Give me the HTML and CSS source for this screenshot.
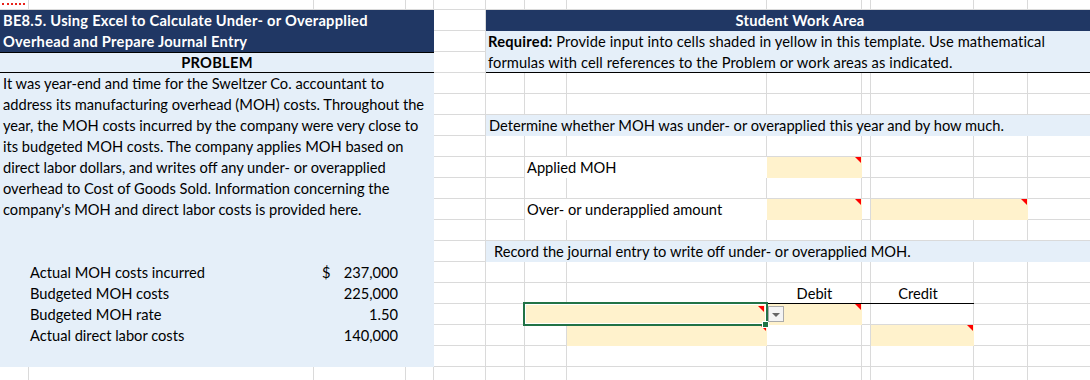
FILE: index.html
```html
<!DOCTYPE html>
<html lang="en">
<head>
    <meta charset="UTF-8">
    <title>BE8.5 Under- or Overapplied Overhead</title>
    <link rel="stylesheet" href="styles.css">
</head>
<body>
    <div class="sheet">
        <!-- cut-off cell in the top row -->
        <div class="corner"><span class="scrap"></span></div>

        <!-- problem side -->
        <div class="title">BE8.5. Using Excel to Calculate Under- or Overapplied<br>Overhead and Prepare Journal Entry</div>
        <div class="problem-head">PROBLEM</div>
        <div class="problem-bg"></div>
        <p class="story">
            It was year-end and time for the Sweltzer Co. accountant to<br>
            address its manufacturing overhead (MOH) costs. Throughout the<br>
            year, the MOH costs incurred by the company were very close to<br>
            its budgeted MOH costs. The company applies MOH based on<br>
            direct labor dollars, and writes off any under- or overapplied<br>
            overhead to Cost of Goods Sold. Information concerning the<br>
            company's MOH and direct labor costs is provided here.
        </p>

        <div class="label r14">Actual MOH costs incurred</div>
        <div class="amount r14"><span>$</span><span>237,000</span></div>
        <div class="label r15">Budgeted MOH costs</div>
        <div class="amount r15"><span>225,000</span></div>
        <div class="label r16">Budgeted MOH rate</div>
        <div class="amount r16"><span>1.50</span></div>
        <div class="label r17">Actual direct labor costs</div>
        <div class="amount r17"><span>140,000</span></div>

        <!-- student work area -->
        <div class="work-head">Student Work Area</div>
        <div class="required"><b>Required:</b> Provide input into cells shaded in yellow in this template. Use mathematical<br>formulas with cell references to the Problem or work areas as indicated.</div>

        <div class="band r7">Determine whether MOH was under- or overapplied this year and by how much.</div>

        <div class="work-label r9">Applied MOH</div>
        <div class="input col-debit r9"></div>

        <div class="work-label r11">Over- or underapplied amount</div>
        <div class="input col-debit r11"></div>
        <div class="input col-wide r11"></div>

        <div class="band indent r13">Record the journal entry to write off under- or overapplied MOH.</div>

        <div class="entry-head r15">
            <span>Debit</span>
            <span>Credit</span>
        </div>

        <div class="input col-account r16">
            <span class="selection"></span>
            <span class="fill-handle"></span>
            <span class="dropdown"></span>
        </div>
        <div class="input col-debit r16"></div>

        <div class="input col-account-indent r17"></div>
        <div class="input col-credit r17"></div>
    </div>
</body>
</html>
```

FILE: styles.css
```css
/* sheet frame */
body {
    margin: 0;
    background: #fff;
    font-family: Lato, "Open Sans", sans-serif;
    font-size: 14.67px;
    color: #000;
}

b,
.title,
.problem-head,
.work-head {
    font-weight: bold;
    letter-spacing: 0.25px;
}

.sheet {
    display: grid;
    grid-template-columns: 29px 285px 92px 28px 52px 39px 42px 200px 95px 9px 103px 54px 1fr;
    grid-template-rows: 10px repeat(18, 21px);
    width: 1090px;
    height: 380px;
    overflow: hidden;
    line-height: 21px;
    white-space: nowrap;
    /* gridlines: columns, then rows */
    background-image:
        linear-gradient(90deg,
            transparent 28px, #dadada 28px 29px,
            transparent 29px 313px, #dadada 313px 314px,
            transparent 314px 405px, #dadada 405px 406px,
            transparent 406px 433px, #dadada 433px 434px,
            transparent 434px 485px, #dadada 485px 486px,
            transparent 486px 524px, #dadada 524px 525px,
            transparent 525px 566px, #dadada 566px 567px,
            transparent 567px 766px, #dadada 766px 767px,
            transparent 767px 861px, #dadada 861px 862px,
            transparent 862px 870px, #dadada 870px 871px,
            transparent 871px 973px, #dadada 973px 974px,
            transparent 974px 1027px, #dadada 1027px 1028px,
            transparent 1028px),
        linear-gradient(180deg, transparent 20px, #dadada 20px);
    background-size: 100% 100%, 100% 21px;
    background-position: 0 0, 0 10px;
    background-repeat: no-repeat, repeat;
}

/* row helpers */
.r7 { grid-row: 7; }
.r9 { grid-row: 9; }
.r11 { grid-row: 11; }
.r13 { grid-row: 13; }
.r14 { grid-row: 14; }
.r15 { grid-row: 15; }
.r16 { grid-row: 16; }
.r17 { grid-row: 17; }

.corner {
    grid-column: 1;
    grid-row: 1;
    padding: 3px 0 0 2px;
}

.scrap {
    display: block;
    width: 23px;
    height: 2px;
    border-top: 2px dotted #e8231b;
}

/* problem side */
.title {
    grid-column: 1 / 5;
    grid-row: 2 / 4;
    background: #203764;
    color: #fff;
    padding-left: 3px;
}

.problem-head {
    grid-column: 1 / 5;
    grid-row: 4;
    background: #e5eff9;
    border-top: 1px solid #000;
    border-bottom: 1px solid #000;
    line-height: 19px;
    text-align: center;
}

.problem-bg {
    grid-column: 1 / 5;
    grid-row: 5 / 19;
    background: #e5eff9;
}

.story {
    grid-column: 1 / 5;
    grid-row: 5 / 12;
    margin: 0;
    padding-left: 3px;
}

.label {
    grid-column: 2;
    padding-left: 1px;
}

.amount {
    grid-column: 3;
    display: flex;
    justify-content: flex-end;
    padding: 0 8px;
}

.amount span:first-child:not(:last-child) {
    margin-right: auto;
}

/* student work area */
.work-head {
    grid-column: 6 / 14;
    grid-row: 2;
    background: #203764;
    color: #fff;
    text-align: center;
    padding-left: 24px;
}

.required {
    grid-column: 6 / 14;
    grid-row: 3 / 5;
    background: #e5eff9;
    border-bottom: 1px solid #000;
    padding-left: 2px;
    letter-spacing: 0.1px;
}

.band {
    grid-column: 6 / 14;
    background: #e5eff9;
    padding-left: 3px;
}

.band.indent {
    padding-left: 8px;
}

.work-label {
    grid-column: 7 / 9;
    background: #fff;
    padding-left: 2px;
}

.entry-head {
    grid-column: 9 / 12;
    display: grid;
    grid-template-columns: 95px 112px;
    border-bottom: 1px solid #000;
    text-align: center;
}

/* yellow input cells with comment markers */
.input {
    position: relative;
    background: #fff2cc;
}

.input::after {
    content: "";
    position: absolute;
    top: 0;
    right: 1px;
    border-top: 6px solid #f00;
    border-left: 6px solid transparent;
}

.col-debit { grid-column: 9; }
.col-credit { grid-column: 11; }
.col-wide { grid-column: 11 / 13; }
.col-account { grid-column: 7 / 9; }
.col-account-indent { grid-column: 8; }

.col-account::after {
    top: 2px;
    right: 3px;
}

/* active cell */
.selection {
    position: absolute;
    top: -2px;
    left: -2px;
    right: -1px;
    bottom: -1px;
    border: 2px solid #217346;
    box-shadow: inset 0 0 0 1px #fff;
    z-index: 2;
}

.fill-handle {
    position: absolute;
    right: -2px;
    bottom: -3px;
    width: 5px;
    height: 5px;
    background: #217346;
    border: 1px solid #fff;
    z-index: 3;
}

.dropdown {
    position: absolute;
    top: 2px;
    left: calc(100% + 1px);
    width: 14px;
    height: 14px;
    background: #f4f4f4;
    border: 1px solid #ababab;
    z-index: 3;
}

.dropdown::after {
    content: "";
    position: absolute;
    top: 6px;
    left: 3px;
    border-top: 4px solid #666;
    border-left: 4px solid transparent;
    border-right: 4px solid transparent;
}
```
